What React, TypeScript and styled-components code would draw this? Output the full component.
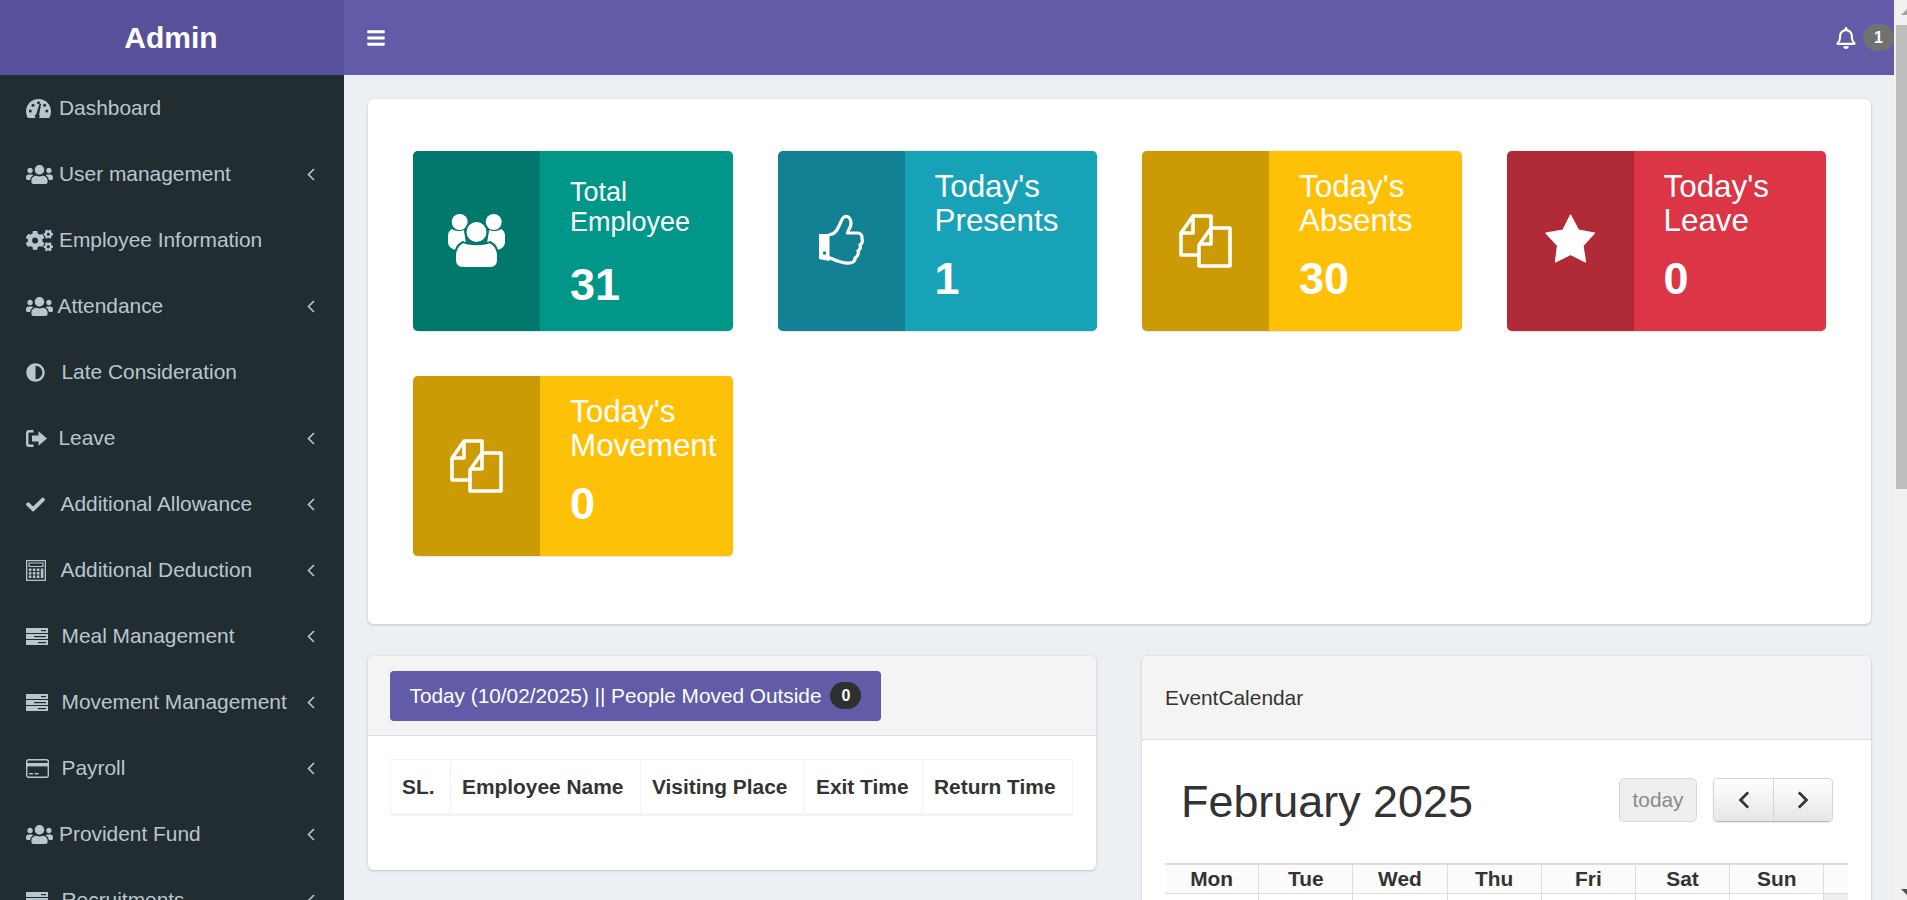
import { ReactNode } from 'react';
import styled, { createGlobalStyle } from 'styled-components';
import { FaAdjust, FaBars, FaCheck, FaCogs, FaRegBell, FaUsers } from 'react-icons/fa';

const GlobalStyle = createGlobalStyle`
    html, body {
        margin: 0;
        height: 900px;
        overflow: hidden;
        font-family: 'Liberation Sans', Arial, sans-serif;
        font-size: 20.9px;
        color: #333;
        background: #ecf0f5;
    }
    * { box-sizing: border-box; }
`;

const Page = styled.div`
    display: flex;
    height: 900px;
    width: 1907px;
`;

const Sidebar = styled.aside`
    flex: 0 0 344px;
    height: 900px;
    overflow: hidden;
    background: #222d32;
`;

const Brand = styled.div`
    height: 75px;
    display: flex;
    align-items: center;
    justify-content: center;
    padding-right: 2px;
    background: #57509a;
    color: #fff;
    font-size: 30px;
    font-weight: 700;
`;

const MenuRow = styled.div<{ $slot: number }>`
    height: 66px;
    display: grid;
    grid-template-columns: ${({ $slot }) => $slot}px 1fr 10px;
    align-items: center;
    padding: 0 27px 0 26px;
    color: #b8c7ce;
    white-space: nowrap;
`;

const MenuIcon = styled.span`
    display: flex;
    align-items: center;

    & > svg {
        display: block;
    }
`;

const Main = styled.div`
    flex: 1;
    min-width: 0;
    display: flex;
    flex-direction: column;
    height: 900px;
    overflow: hidden;
`;

const Topbar = styled.header`
    flex: 0 0 75px;
    display: flex;
    align-items: center;
    justify-content: space-between;
    padding-left: 22px;
    background: #625ca8;
    color: #fff;
`;

const BellGroup = styled.div`
    display: flex;
    align-items: center;
    gap: 6px;
`;

const BellBadge = styled.span`
    width: 31px;
    height: 27px;
    border-radius: 14px;
    display: flex;
    align-items: center;
    justify-content: center;
    background: #717171;
    color: #fff;
    font-size: 16px;
    font-weight: 700;
`;

const Content = styled.main`
    padding: 24px 23px 0 24px;
`;

const Panel = styled.section`
    background: #fff;
    border-radius: 5px;
    box-shadow: 0 0 1px rgba(0, 0, 0, 0.25), 0 1px 3px rgba(0, 0, 0, 0.15);
`;

const StatsPanel = styled(Panel)`
    padding: 52px 0 68px 45px;
    display: grid;
    grid-template-columns: repeat(4, 319.5px);
    gap: 45px 45px;
`;

const StatCard = styled.div<{ $bg: string }>`
    height: 180px;
    display: flex;
    border-radius: 5px;
    overflow: hidden;
    background: ${({ $bg }) => $bg};
    color: #fff;
    box-shadow: 0 0 1px rgba(0, 0, 0, 0.125), 0 1px 2px rgba(0, 0, 0, 0.1);
`;

const StatIcon = styled.div`
    flex: 0 0 127px;
    display: flex;
    align-items: center;
    justify-content: center;
    background: rgba(0, 0, 0, 0.2);
`;

const StatInfo = styled.div<{ $small?: boolean }>`
    padding: ${({ $small }) => ($small ? '26px' : '19px')} 0 0 30px;
`;

const StatTitle = styled.div<{ $small?: boolean }>`
    font-size: ${({ $small }) => ($small ? '27px' : '31.4px')};
    line-height: ${({ $small }) => ($small ? '30px' : '34px')};
    white-space: pre-line;
`;

const StatValue = styled.div<{ $small?: boolean }>`
    margin-top: ${({ $small }) => ($small ? '25px' : '18px')};
    font-size: 45px;
    line-height: 46px;
    font-weight: 700;
`;

const BottomRow = styled.div`
    display: grid;
    grid-template-columns: 728px 729px;
    gap: 46px;
    margin-top: 32px;
    align-items: start;
`;

const PanelHeader = styled.div<{ $height: number }>`
    height: ${({ $height }) => $height}px;
    display: flex;
    align-items: center;
    padding: 0 23px 0 22px;
    background: #f4f4f4;
    border-bottom: 1px solid #dcdfe2;
    border-radius: 5px 5px 0 0;
`;

const CalendarTitle = styled.span`
    padding-left: 1px;
`;

const MovedButton = styled.div`
    height: 50px;
    display: flex;
    align-items: center;
    gap: 9px;
    padding: 0 20px 0 19.5px;
    border-radius: 4px;
    background: #625ca8;
    color: #fff;
    font-size: 20.8px;
    white-space: nowrap;
`;

const CountBadge = styled.span`
    width: 31px;
    height: 27px;
    border-radius: 14px;
    display: flex;
    align-items: center;
    justify-content: center;
    background: #2f2f2f;
    color: #fff;
    font-size: 16px;
    font-weight: 700;
`;

const TableWrap = styled.div`
    padding: 23px 23px 54px 22px;
`;

const MoveTable = styled.table`
    width: 100%;
    border-collapse: collapse;
    table-layout: fixed;

    th {
        height: 55px;
        padding: 0 0 0 11px;
        border: 1px solid #f4f4f4;
        border-bottom: 3px solid #f4f4f4;
        font-weight: 700;
        text-align: left;
        color: #333;
        white-space: nowrap;
    }
`;

const CalendarBody = styled.div`
    padding: 38px 23px 0;
`;

const CalendarToolbar = styled.div`
    display: flex;
    align-items: center;
    padding: 0 15px 0 16px;
    height: 44px;
`;

const MonthTitle = styled.h2`
    margin: 0;
    padding-top: 4px;
    flex: 1;
    font-size: 44.9px;
    font-weight: 400;
    color: #333;
`;

const TodayButton = styled.div`
    width: 78px;
    height: 44px;
    display: flex;
    align-items: center;
    justify-content: center;
    border: 1px solid #d8d8d8;
    border-radius: 5px;
    background: #efefef;
    color: #8a8a8a;
    font-size: 20.8px;
`;

const NavGroup = styled.div`
    display: flex;
    margin-left: 16px;
    border: 1px solid #d4d4d4;
    border-bottom-color: #b5b5b5;
    border-radius: 5px;
    overflow: hidden;
    box-shadow: 0 1px 2px rgba(0, 0, 0, 0.08);
`;

const NavButton = styled.div`
    width: 59px;
    height: 42px;
    display: flex;
    align-items: center;
    justify-content: center;
    background: linear-gradient(to bottom, #fff, #e6e6e6);

    & + & {
        border-left: 1px solid #d4d4d4;
    }
`;

const CalendarGrid = styled.div`
    margin-top: 41px;
    display: grid;
    grid-template-columns: repeat(7, 94.2px) 1fr;
    border-top: 2px solid #ddd;
`;

const DayHead = styled.div`
    height: 29px;
    display: flex;
    align-items: center;
    justify-content: center;
    background: #fcfcfc;
    border-right: 1px solid #ddd;
    border-bottom: 1px solid #ddd;
    font-weight: 700;
    color: #333;
`;

const GutterHead = styled.div`
    border-bottom: 1px solid #ddd;
    background: #fcfcfc;
`;

const DayCell = styled.div`
    height: 40px;
    border-right: 1px solid #ddd;
    background: #fff;
`;

const GutterCell = styled.div`
    background: #eee;
`;

const ScrollTrack = styled.div`
    flex: 0 0 13px;
    height: 900px;
    display: flex;
    flex-direction: column;
    align-items: flex-end;
    background: #f1f1f1;
`;

const ScrollArrowTop = styled.svg`
    margin-top: 9px;
    flex: none;
`;

const ScrollThumb = styled.div`
    margin-top: 10px;
    width: 11px;
    height: 464px;
    flex: none;
    background: #bdbdbd;
`;

const ScrollArrowBottom = styled.svg`
    margin-top: auto;
    margin-bottom: 5px;
    flex: none;
`;

const StarWrap = styled.span`
    display: flex;
    margin-bottom: 6px;
`;

const Chevron = ({ dir = 'left', w = 8, h = 13, sw = 1.6, color = '#b8c7ce' }: { dir?: 'left' | 'right'; w?: number; h?: number; sw?: number; color?: string }) => (
    <svg width={w} height={h} viewBox="0 0 8 13" fill="none" stroke={color} strokeWidth={sw}>
        <path d={dir === 'left' ? 'M7 1 1.5 6.5 7 12' : 'M1 1l5.5 5.5L1 12'} />
    </svg>
);

const GaugeIcon = () => (
    <svg width="25" height="19" viewBox="0 0 25 19">
        <path
            fill="#b8c7ce"
            d="M12.5 0C5.6 0 0 5.5 0 12.3c0 2.4.7 4.7 1.9 6.7h21.2c1.2-2 1.9-4.3 1.9-6.7C25 5.5 19.4 0 12.5 0z"
        />
        <g fill="#222d32">
            <circle cx="4.3" cy="12" r="1.5" />
            <circle cx="7" cy="6.2" r="1.5" />
            <circle cx="12.5" cy="3.8" r="1.5" />
            <circle cx="18.6" cy="6.2" r="1.5" />
            <circle cx="20.8" cy="12" r="1.5" />
            <path d="M10.2 15.2l3.4-10.6 1.5.4-2 10.8a2.3 2.3 0 1 1-2.9-.6z" />
        </g>
    </svg>
);

const ExitIcon = () => (
    <svg width="21" height="17" viewBox="0 0 21 17" fill="#b8c7ce">
        <path d="M7.5 0H3a3 3 0 0 0-3 3v11a3 3 0 0 0 3 3h4.5v-2.4H3.4a1 1 0 0 1-1-1V3.4a1 1 0 0 1 1-1h4.1z" />
        <path d="M12.5 1.2 21 8.5l-8.5 7.3V11.4H6V5.6h6.5z" />
    </svg>
);

const CalculatorIcon = () => (
    <svg width="20" height="21" viewBox="0 0 20 21" fill="#b8c7ce">
        <path fillRule="evenodd" d="M0 0h20v21H0zM1.3 1.3v18.4h17.4V1.3z" />
        <path fillRule="evenodd" d="M2.5 2.5h15v4.5h-15zM3.7 3.6v2.3h12.6V3.6z" />
        {[8.5, 12, 15.5].map((y) =>
            [2.8, 6.8, 10.8].map((x) => <rect key={`${x}-${y}`} x={x} y={y} width="2.6" height="2.6" />)
        )}
        <rect x="14.8" y="8.5" width="2.6" height="9.6" />
    </svg>
);

const ServerIcon = () => (
    <svg width="22" height="17" viewBox="0 0 22 17">
        <g fill="#b8c7ce">
            <rect y="0" width="22" height="5" />
            <rect y="6" width="22" height="5" />
            <rect y="12" width="22" height="5" />
        </g>
        <g fill="#222d32">
            <rect x="15" y="2" width="5" height="1.2" />
            <rect x="8" y="8" width="12" height="1.2" />
            <rect x="12" y="14" width="8" height="1.2" />
        </g>
    </svg>
);

const CardIcon = () => (
    <svg width="23" height="19" viewBox="0 0 23 19">
        <rect x="0.7" y="0.7" width="21.6" height="17.6" rx="2" fill="none" stroke="#b8c7ce" strokeWidth="1.4" />
        <rect x="1" y="4" width="21" height="3.4" fill="#b8c7ce" />
        <rect x="3" y="14" width="4" height="1.4" fill="#b8c7ce" />
        <rect x="8.5" y="14" width="4" height="1.4" fill="#b8c7ce" />
    </svg>
);

const PeopleGlyph = () => (
    <svg width="57" height="54" viewBox="0 0 57 54" fill="#fff">
        <circle cx="11.7" cy="8" r="8" />
        <circle cx="45.7" cy="8" r="8" />
        <path d="M0 22c0-4 2-6 4-7 3 2.500 9 2.500 12 1l2 14-10 6C3 35 0 32 0 28z" />
        <path d="M57 22c0-4-2-6-4-7-3 2.500-9 2.500-12 1l-2 14 10 6c5-1 8-4 8-8z" />
        <path
            d="M7 42c0-8 4-12 8-14 5 3 22 3 27 0 4 2 8 6 8 14v4c0 5-3 8-8 8H15c-5 0-8-3-8-8z"
            stroke="#00786d"
            strokeWidth="2"
        />
        <circle cx="28.5" cy="18" r="11" stroke="#00786d" strokeWidth="2" />
    </svg>
);

const ThumbGlyph = () => (
    <svg width="45" height="55" viewBox="0 0 45 55" fill="none">
        <path d="M0 20h10.5v27L0 45z" fill="#fff" />
        <circle cx="5.5" cy="39" r="1.7" fill="#128293" />
        <path
            d="M11 20.5c4 0 7-4 9-8.500 2-4 3-8.500 6-9.500 3-1 6 2 6 7 0 4-3 6.500-3.500 9.500H38.500c3 0 5 2 4.500 6 1 2 0 5-2 6 1 2 0 5-2 6 1 3-1 6-3 7 .5 2.500-2 5-5 5-7 1-13-2-20-5"
            stroke="#fff"
            strokeWidth="3.200"
            strokeLinejoin="round"
            strokeLinecap="round"
        />
    </svg>
);

const CopyGlyph = () => (
    <svg width="53" height="54" viewBox="0 0 53 54" fill="none" stroke="#fff" strokeWidth="3.600" strokeLinejoin="round">
        <path d="M19 41H2V19L14 2h18v11" />
        <path d="M14 3v16H2" />
        <path d="M20 52V31L32 14h19v38z" />
        <path d="M32 14v16H20" />
    </svg>
);

const StarGlyph = () => (
    <StarWrap>
        <svg width="50" height="49" viewBox="0 0 50 49" fill="#fff" stroke="#fff" strokeWidth="1.200" strokeLinejoin="round">
            <path d="M25.500 1 33.500 16 49.500 19 38 31.500 40.500 48 25.500 40.500 10.500 48 12.500 31.500 1 19 18 16z" />
        </svg>
    </StarWrap>
);

type MenuEntry = { label: string; icon: ReactNode; slot: number; sub?: boolean };

const usersIcon = <FaUsers size={27} color="#b8c7ce" />;

const MENU: MenuEntry[] = [
    { label: 'Dashboard', icon: <GaugeIcon />, slot: 33 },
    { label: 'User management', icon: usersIcon, slot: 33, sub: true },
    { label: 'Employee Information', icon: <FaCogs size={27} color="#b8c7ce" />, slot: 33 },
    { label: 'Attendance', icon: usersIcon, slot: 31.5, sub: true },
    { label: 'Late Consideration', icon: <FaAdjust size={19} color="#b8c7ce" />, slot: 35.5 },
    { label: 'Leave', icon: <ExitIcon />, slot: 32.5, sub: true },
    { label: 'Additional Allowance', icon: <FaCheck size={19} color="#b8c7ce" />, slot: 34.5, sub: true },
    { label: 'Additional Deduction', icon: <CalculatorIcon />, slot: 34.5, sub: true },
    { label: 'Meal Management', icon: <ServerIcon />, slot: 35.5, sub: true },
    { label: 'Movement Management', icon: <ServerIcon />, slot: 35.5, sub: true },
    { label: 'Payroll', icon: <CardIcon />, slot: 35.5, sub: true },
    { label: 'Provident Fund', icon: usersIcon, slot: 33, sub: true },
    { label: 'Recruitments', icon: <ServerIcon />, slot: 35.5, sub: true }
];

const STATS = [
    { title: 'Total\nEmployee', value: '31', bg: '#009688', icon: <PeopleGlyph />, small: true },
    { title: "Today's\nPresents", value: '1', bg: '#17a2b8', icon: <ThumbGlyph /> },
    { title: "Today's\nAbsents", value: '30', bg: '#ffc107', icon: <CopyGlyph /> },
    { title: "Today's\nLeave", value: '0', bg: '#dc3545', icon: <StarGlyph /> },
    { title: "Today's\nMovement", value: '0', bg: '#ffc107', icon: <CopyGlyph /> }
];

const DAYS = ['Mon', 'Tue', 'Wed', 'Thu', 'Fri', 'Sat', 'Sun'];

const COLUMNS = [
    { label: 'SL.', width: 60 },
    { label: 'Employee Name', width: 190 },
    { label: 'Visiting Place', width: 164 },
    { label: 'Exit Time', width: 118 },
    { label: 'Return Time', width: 150 }
];

const App = () => (
    <>
        <GlobalStyle />
        <Page>
            <Sidebar>
                <Brand>Admin</Brand>
                {MENU.map((item) => (
                    <MenuRow key={item.label} $slot={item.slot}>
                        <MenuIcon>{item.icon}</MenuIcon>
                        <span>{item.label}</span>
                        {item.sub ? <Chevron /> : <span />}
                    </MenuRow>
                ))}
            </Sidebar>
            <Main>
                <Topbar>
                    <FaBars size={20} />
                    <BellGroup>
                        <FaRegBell size={22} />
                        <BellBadge>1</BellBadge>
                    </BellGroup>
                </Topbar>
                <Content>
                    <StatsPanel>
                        {STATS.map((stat, index) => (
                            <StatCard key={index} $bg={stat.bg}>
                                <StatIcon>{stat.icon}</StatIcon>
                                <StatInfo $small={stat.small}>
                                    <StatTitle $small={stat.small}>{stat.title}</StatTitle>
                                    <StatValue $small={stat.small}>{stat.value}</StatValue>
                                </StatInfo>
                            </StatCard>
                        ))}
                    </StatsPanel>
                    <BottomRow>
                        <Panel>
                            <PanelHeader $height={80}>
                                <MovedButton>
                                    Today (10/02/2025) || People Moved Outside
                                    <CountBadge>0</CountBadge>
                                </MovedButton>
                            </PanelHeader>
                            <TableWrap>
                                <MoveTable>
                                    <colgroup>
                                        {COLUMNS.map((col) => (
                                            <col key={col.label} width={col.width} />
                                        ))}
                                    </colgroup>
                                    <thead>
                                        <tr>
                                            {COLUMNS.map((col) => (
                                                <th key={col.label}>{col.label}</th>
                                            ))}
                                        </tr>
                                    </thead>
                                </MoveTable>
                            </TableWrap>
                        </Panel>
                        <Panel>
                            <PanelHeader $height={84}>
                                <CalendarTitle>EventCalendar</CalendarTitle>
                            </PanelHeader>
                            <CalendarBody>
                                <CalendarToolbar>
                                    <MonthTitle>February 2025</MonthTitle>
                                    <TodayButton>today</TodayButton>
                                    <NavGroup>
                                        <NavButton>
                                            <Chevron w={12} h={18} sw={2} color="#333" />
                                        </NavButton>
                                        <NavButton>
                                            <Chevron dir="right" w={12} h={18} sw={2} color="#333" />
                                        </NavButton>
                                    </NavGroup>
                                </CalendarToolbar>
                                <CalendarGrid>
                                    {DAYS.map((day) => (
                                        <DayHead key={day}>{day}</DayHead>
                                    ))}
                                    <GutterHead />
                                    {DAYS.map((day) => (
                                        <DayCell key={day} />
                                    ))}
                                    <GutterCell />
                                </CalendarGrid>
                            </CalendarBody>
                        </Panel>
                    </BottomRow>
                </Content>
            </Main>
            <ScrollTrack>
                <ScrollArrowTop width="6" height="6" viewBox="0 0 6 6">
                    <path d="M0 6 6 0v6z" fill="#a3a3a3" />
                </ScrollArrowTop>
                <ScrollThumb />
                <ScrollArrowBottom width="6" height="6" viewBox="0 0 6 6">
                    <path d="M0 0h6v6z" fill="#505050" />
                </ScrollArrowBottom>
            </ScrollTrack>
        </Page>
    </>
);

export default App;
